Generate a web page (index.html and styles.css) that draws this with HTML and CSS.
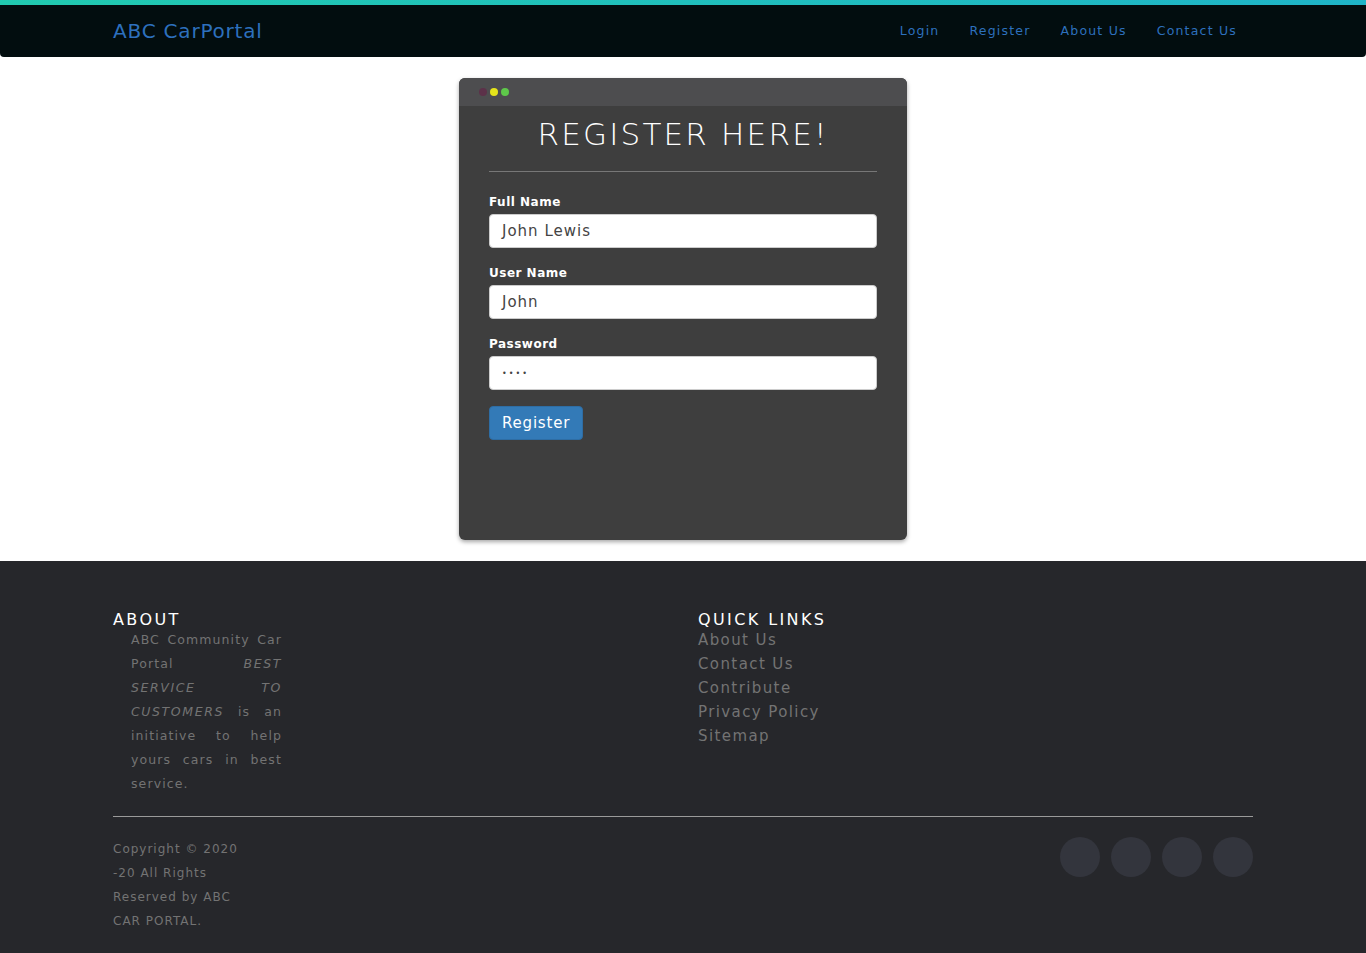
FILE: index.html
```html
<!DOCTYPE html>
<html>
<head>
<meta charset="utf-8">
<title>ABC CarPortal - Register</title>
<link rel="stylesheet" href="styles.css">
</head>
<body>
<nav class="navbar">
  <div class="container nav-inner">
    <a class="brand" href="#">ABC CarPortal</a>
    <ul class="nav-links">
      <li><a href="#">Login</a></li>
      <li><a href="#">Register</a></li>
      <li><a href="#">About Us</a></li>
      <li><a href="#">Contact Us</a></li>
    </ul>
  </div>
</nav>

<main class="main">
  <div class="card">
    <div class="card-bar">
      <span class="dot dot-red"></span><span class="dot dot-yellow"></span><span class="dot dot-green"></span>
    </div>
    <div class="card-body">
      <h1 class="title">REGISTER HERE!</h1>
      <hr class="card-rule">
      <form class="form">
        <label class="label">Full Name</label>
        <div class="input">John Lewis</div>
        <label class="label">User Name</label>
        <div class="input">John</div>
        <label class="label">Password</label>
        <div class="input input-pass">••••</div>
        <button type="button" class="btn">Register</button>
      </form>
    </div>
  </div>
</main>

<footer class="footer">
  <div class="container">
    <div class="footer-row">
      <div class="footer-col">
        <h6 class="footer-head">ABOUT</h6>
        <p class="about-text">ABC Community Car Portal <i class="about-em">BEST</i> <i class="about-em">SERVICE</i> <i class="about-em">TO</i> <i class="about-em">CUSTOMERS</i> is an initiative to help yours cars in best service.</p>
      </div>
      <div class="footer-col">
        <h6 class="footer-head">QUICK LINKS</h6>
        <ul class="quick-links">
          <li><a href="#">About Us</a></li>
          <li><a href="#">Contact Us</a></li>
          <li><a href="#">Contribute</a></li>
          <li><a href="#">Privacy Policy</a></li>
          <li><a href="#">Sitemap</a></li>
        </ul>
      </div>
    </div>
    <hr class="footer-rule">
    <div class="footer-bottom">
      <p class="copyright">Copyright © 2020 -20 All Rights Reserved by ABC CAR PORTAL.</p>
      <ul class="social">
        <li class="social-icon"></li>
        <li class="social-icon"></li>
        <li class="social-icon"></li>
        <li class="social-icon"></li>
      </ul>
    </div>
  </div>
</footer>
</body>
</html>
```

FILE: styles.css
```css
* { box-sizing: border-box; }
html, body { margin: 0; padding: 0; }
body {
  font-family: "DejaVu Sans", "Open Sans", sans-serif;
  background: #ffffff;
  color: #333;
}
a { text-decoration: none; }
ul { list-style: none; margin: 0; padding: 0; }

.container {
  width: 1140px;
  margin: 0 auto;
}

/* NAVBAR */
.navbar {
  background: #020d0f;
  border-top: 5px solid #1fbfbc;
  border-image: linear-gradient(90deg, #21cab0, #1fb4c8) 1;
  border-radius: 0 0 4px 4px;
  height: 57px;
}
.nav-inner {
  display: flex;
  align-items: center;
  justify-content: space-between;
  height: 51px;
}
.brand {
  color: #2d70bd;
  font-size: 20px;
  letter-spacing: 0.8px;
  font-weight: 400;
}
.nav-links {
  display: flex;
  margin-right: 1px;
}
.nav-links a {
  display: block;
  padding: 0 15px;
  color: #2d70bd;
  font-size: 12.5px;
  letter-spacing: 1.2px;
}

/* MAIN */
.main {
  padding: 21px 0;
  display: flex;
  justify-content: center;
}
.card {
  width: 448px;
  height: 462px;
  background: #3e3e3e;
  border-radius: 6px;
  overflow: hidden;
  box-shadow: 0 2px 4px rgba(0,0,0,0.35);
}
.card-bar {
  height: 28px;
  background: #4d4d4f;
  display: flex;
  align-items: center;
  gap: 3px;
  padding-left: 20px;
}
.dot {
  width: 8px;
  height: 8px;
  border-radius: 50%;
  display: inline-block;
}
.dot-red { background: #5c3149; }
.dot-yellow { background: #e5e41b; }
.dot-green { background: #5ec84a; }

.card-body {
  padding: 0 30px;
}
.title {
  margin: 10px 0 0;
  text-align: center;
  color: #ffffff;
  font-size: 31px;
  font-weight: 300;
  letter-spacing: 2.2px;
  line-height: 36px;
  font-family: "DejaVu Sans", sans-serif;
}
.card-rule {
  border: 0;
  border-top: 1px solid #777;
  margin: 19px 0 21px;
}
.form {
  display: flex;
  flex-direction: column;
  align-items: flex-start;
}
.label {
  color: #ffffff;
  font-size: 12px;
  font-weight: 700;
  letter-spacing: 0.5px;
  line-height: 18px;
  margin-bottom: 3px;
}
.input {
  width: 100%;
  height: 34px;
  background: #fff;
  border: 1px solid #ccc;
  border-radius: 4px;
  padding: 0 12px;
  display: flex;
  align-items: center;
  color: #444;
  font-size: 15px;
  letter-spacing: 1px;
  margin-bottom: 16px;
}
.input-pass {
  font-size: 8px;
  letter-spacing: 2px;
}
.btn {
  height: 34px;
  padding: 0 12px;
  background: #337ab7;
  border: 1px solid #2e6da4;
  border-radius: 4px;
  color: #fff;
  font-family: "DejaVu Sans", sans-serif;
  font-size: 15px;
  letter-spacing: 0.8px;
}

/* FOOTER */
.footer {
  background: #26272b;
  padding: 50px 0 20px;
  min-height: 392px;
}
.footer-row {
  display: flex;
}
.footer-col {
  width: 585px;
  flex-shrink: 0;
}
.footer-col + .footer-col {
  width: 555px;
}
.footer-head {
  margin: 0;
  color: #ffffff;
  font-size: 16px;
  font-weight: 400;
  letter-spacing: 2.4px;
  line-height: 17px;
}
.about-text {
  margin: 0 0 0 18px;
  width: 151px;
  color: #737373;
  font-size: 12.5px;
  line-height: 24px;
  letter-spacing: 1.1px;
  text-align: justify;
}
.about-em {
  letter-spacing: 1.6px;
}
.quick-links li { line-height: 24px; }
.quick-links a {
  color: #737373;
  font-size: 15px;
  letter-spacing: 1.4px;
}
.footer-rule {
  border: 0;
  border-top: 1px solid #9a9a9a;
  margin: 20px 0 20px;
}
.footer-bottom {
  display: flex;
  justify-content: space-between;
  align-items: flex-start;
}
.copyright {
  margin: 0;
  width: 135px;
  color: #737373;
  font-size: 12px;
  line-height: 24px;
  letter-spacing: 1px;
}
.social {
  display: flex;
  gap: 11px;
}
.social-icon {
  width: 40px;
  height: 40px;
  border-radius: 50%;
  background: #33353d;
}
```
